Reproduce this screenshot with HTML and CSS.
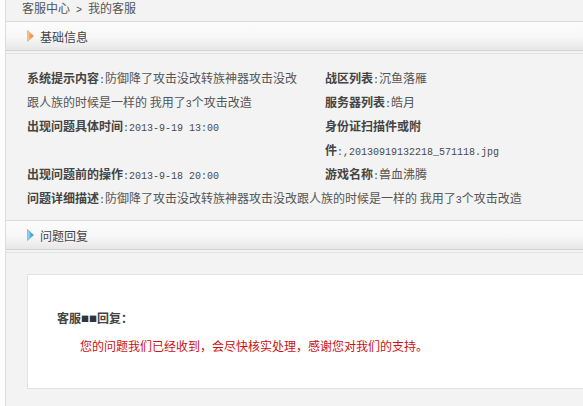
FILE: index.html
```html
<!DOCTYPE html>
<html lang="zh-CN">
<head>
<meta charset="utf-8">
<title>我的客服</title>
<link rel="stylesheet" href="styles.css">
</head>
<body>
<div class="page">
  <div class="crumb">客服中心<span class="num"> &gt; </span>我的客服</div>

  <div class="sec-head">
    <svg class="arrow" width="7" height="12" viewBox="0 0 7 12">
      <defs>
        <linearGradient id="go" x1="0" y1="0" x2="1" y2="0">
          <stop offset="0" stop-color="#fcd3a6"/>
          <stop offset="0.45" stop-color="#f4a255"/>
          <stop offset="1" stop-color="#e2772a"/>
        </linearGradient>
      </defs>
      <polygon points="0.5,0.5 6.5,6 0.5,11.5" fill="url(#go)" stroke="#e89a55" stroke-width="0.6"/>
    </svg>
    <span>基础信息</span>
  </div>

  <div class="info">
    <div class="info-grid">
      <div class="cell c-sys"><b>系统提示内容</b><span class="num">:</span>防御降了攻击没改转族神器攻击没改跟人族的时候是一样的 我用了<span class="num">3</span>个攻击改造</div>
      <div class="cell c-zone"><b>战区列表</b><span class="num">:</span>沉鱼落雁</div>
      <div class="cell c-server"><b>服务器列表</b><span class="num">:</span>皓月</div>
      <div class="cell c-time"><b>出现问题具体时间</b><span class="num">:2013-9-19 13:00</span></div>
      <div class="cell c-id"><b>身份证扫描件或附件</b><span class="num">:,20130919132218_571118.jpg</span></div>
      <div class="cell c-op"><b>出现问题前的操作</b><span class="num">:2013-9-18 20:00</span></div>
      <div class="cell c-game"><b>游戏名称</b><span class="num">:</span>兽血沸腾</div>
      <div class="cell c-desc"><b>问题详细描述</b><span class="num">:</span>防御降了攻击没改转族神器攻击没改跟人族的时候是一样的 我用了<span class="num">3</span>个攻击改造</div>
    </div>
  </div>

  <div class="sec-head">
    <svg class="arrow" width="7" height="12" viewBox="0 0 7 12">
      <defs>
        <linearGradient id="gb" x1="0" y1="0" x2="1" y2="0">
          <stop offset="0" stop-color="#b4e2f7"/>
          <stop offset="0.45" stop-color="#5db5e6"/>
          <stop offset="1" stop-color="#2a86c9"/>
        </linearGradient>
      </defs>
      <polygon points="0.5,0.5 6.5,6 0.5,11.5" fill="url(#gb)" stroke="#4fa3d8" stroke-width="0.6"/>
    </svg>
    <span>问题回复</span>
  </div>

  <div class="reply-area">
    <div class="reply-box">
      <p class="reply-title">客服<span class="mask">■■</span>回复：</p>
      <p class="reply-text">您的问题我们已经收到，会尽快核实处理，感谢您对我们的支持。</p>
    </div>
  </div>
</div>
</body>
</html>
```

FILE: styles.css
```css
html, body {
  margin: 0;
  padding: 0;
  background: #fdfdfd;
  overflow: hidden;
}

body {
  font-family: "Noto Sans CJK SC", "Noto Sans", sans-serif;
  font-size: 12px;
  color: #555;
}

.page {
  margin-left: 5px;
  width: 700px;
  min-height: 406px;
  border-left: 1px solid #dcdcdc;
  background: #f3f3f3;
}

.num {
  font-family: "Liberation Mono", "DejaVu Sans Mono", monospace;
  font-size: 10px;
  line-height: 0;
  white-space: pre;
  color: #4a4a4a;
}

.cell .num {
  white-space: normal;
}

.crumb {
  box-sizing: border-box;
  height: 21px;
  padding-top: 1px;
  padding-left: 16px;
  line-height: 13px;
  color: #555;
}

.sec-head {
  display: flex;
  align-items: center;
  height: 28px;
  padding-left: 21px;
  border-top: 1px solid #dadada;
  border-bottom: 1px solid #d2d2d2;
  background: linear-gradient(to bottom, #fdfcfd 0%, #f8f7f8 55%, #e7e7e7 100%);
  color: #444;
  position: relative;
}

.sec-head::after {
  content: "";
  position: absolute;
  left: 0;
  right: 0;
  bottom: -4px;
  height: 1px;
  background: #e2e2e2;
}

.arrow {
  display: block;
  margin-right: 6px;
}

.info {
  padding: 15px 0 10px 21px;
}

.info-grid {
  display: grid;
  grid-template-columns: 275px 1fr;
  column-gap: 23px;
  line-height: 24px;
  align-items: start;
}

.cell b {
  color: #444;
  font-weight: bold;
}

.c-sys { grid-column: 1; grid-row: 1 / span 2; }
.c-zone { grid-column: 2; grid-row: 1; }
.c-server { grid-column: 2; grid-row: 2; }
.c-time { grid-column: 1; grid-row: 3; }
.c-id { grid-column: 2; grid-row: 3; width: 250px; }
.c-op { grid-column: 1; grid-row: 4; }
.c-game { grid-column: 2; grid-row: 4; }
.c-desc { grid-column: 1 / -1; grid-row: 5; }

.reply-area {
  padding: 24px 0 17px 21px;
}

.reply-box {
  background: #fff;
  border: 1px solid #e2e2e2;
  border-right: none;
  padding: 31px 0 30px 29px;
}

.reply-box p {
  margin: 0;
  line-height: 24px;
}

.reply-title {
  font-weight: bold;
  color: #444;
}

.mask {
  font-size: 8px;
  line-height: 0;
  color: #333;
  vertical-align: 1px;
}

.reply-text {
  margin-top: 4px !important;
  padding-left: 23px;
  color: #cc1111;
}
```
